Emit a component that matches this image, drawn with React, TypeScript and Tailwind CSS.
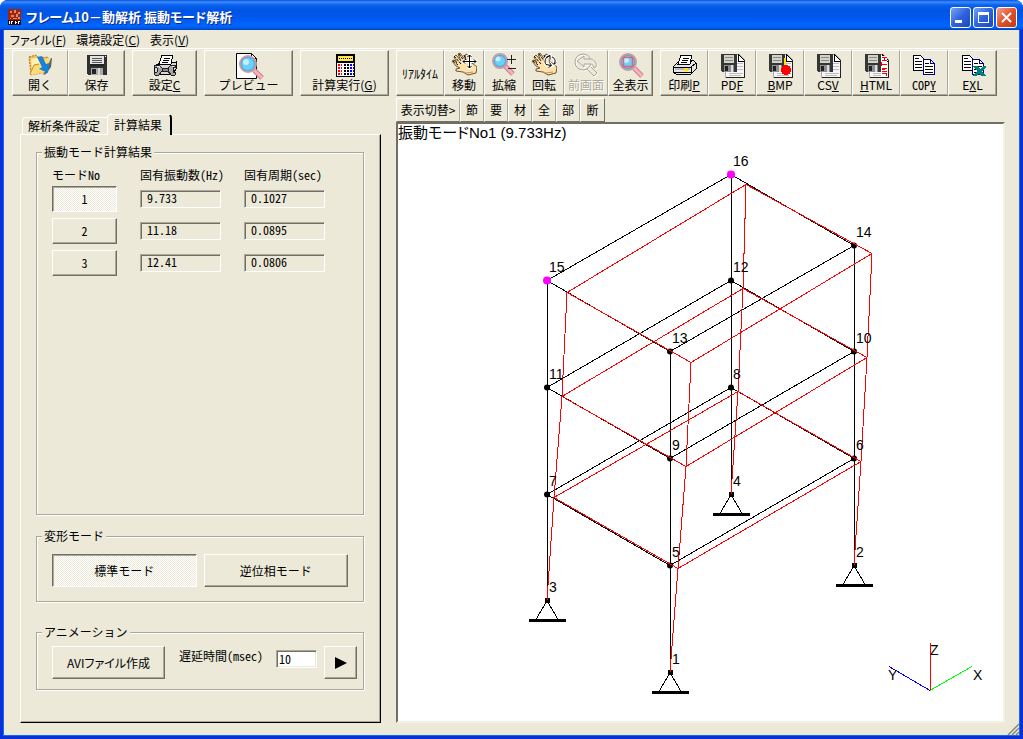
import React, { useState } from 'react';

type Point = [number, number];

interface ToolButtonProps {
  width: string;
  icon?: React.ReactNode;
  label: React.ReactNode;
  last?: boolean;
  disabled?: boolean;
}

const raised =
  'border border-t-white border-l-white border-r-[#716f64] border-b-[#716f64] shadow-[inset_-1px_-1px_0_#aca899] bg-[#ece9d8]';
const pressed =
  'border border-t-[#716f64] border-l-[#716f64] border-r-white border-b-white shadow-[inset_1px_1px_0_#aca899] bg-[repeating-conic-gradient(#fff_0_25%,#ece9d8_0_50%)] bg-[length:2px_2px]';
const sunken =
  'border border-t-[#aca899] border-l-[#aca899] border-r-white border-b-white shadow-[inset_1px_1px_0_#716f64,inset_-1px_-1px_0_#ece9d8]';

// ---------------------------------------------------------------- icons

const Icon: React.FC<{ children: React.ReactNode; crisp?: boolean }> = ({ children, crisp = false }) => (
  <svg width="26" height="26" viewBox="0 0 26 26" fill="none" shapeRendering={crisp ? 'crispEdges' : 'auto'} aria-hidden="true">
    {children}
  </svg>
);

const AppIcon = () => (
  <svg width="14" height="17" viewBox="0 0 14 17" shapeRendering="crispEdges" aria-hidden="true">
    <rect width="13" height="16" fill="#a02410" />
    <path d="M2 2h2v2h-2zM6 1h2v3h-2zM10 3h2v2h-2zM3 6h3v2h-3zM8 5h2v3h-2zM5 9h4v1h-4zM2 9h1v1h-1zM10 8h2v2h-2z" fill="#e08a60" />
    <rect y="11" width="13" height="5" fill="#2a0a06" />
    <path d="M1 12h1v3h-1zM3 12h2v1h-1v2h-1zM7 12h1v3h-1zM8 13h1v1h-1zM10 12h1v3h-1zM11 12h1v1h-1z" fill="#fff" />
  </svg>
);

const OpenIcon = () => (
  <Icon>
    <path d="M2 5l7-2 3 3 9-1-1 15-16 3z" fill="#f2bd48" stroke="#b4742c" strokeDasharray="2 1" />
    <path d="M4 7l8-2 2 13-9 3z" fill="#fff0b4" />
    <path d="M3 21l4-8 6-1 7-6 5 1-6 13-14 3z" fill="#ffda78" />
    <path d="M24 6h1l-1 9-5 7-3 1 4-7z" fill="#59616c" />
    <path d="M3 22l4-9 5-1" stroke="#c8862c" />
    <path d="M10 5l5-1 4 8 3-1-1 10-9-4 3-2z" fill="#1583d8" />
  </Icon>
);

const SaveIcon = () => (
  <Icon crisp>
    <path d="M3 3h20v20h-19l-1-1z" fill="#303030" />
    <rect x="6" y="4" width="14" height="10" fill="#e4e4e4" />
    <path d="M8 6h10M8 8h10M8 10h10" stroke="#555" />
    <path d="M6 12h14v2h-14z" fill="#222" />
    <rect x="7" y="16" width="12" height="7" fill="#a8a8a8" />
    <rect x="8" y="17" width="4" height="5" fill="#222" />
    <rect x="14" y="16" width="2" height="7" fill="#d8d8d8" />
    <rect x="21" y="4" width="1" height="1" fill="#fff" />
  </Icon>
);

const PrinterPaper = () => (
  <>
    <path d="M7 12l3-9h11l-2 9z" fill="#fff" stroke="#000" />
    <path d="M12 6h6M11 8h6M10 10h6" stroke="#000" />
  </>
);

const SetupIcon = () => (
  <Icon crisp>
    <path d="M2 15l5-4h12l5-1v7l-3 5h-16l-3-2z" fill="#d8d8d8" stroke="#000" />
    <PrinterPaper />
    <path d="M8 16h10v3h-10z" fill="#8c8c8c" stroke="#222" />
    <path d="M3 13h4l3 3v3l-3 4h-4l-1-2 3-1v-4l-3-1zM23 13h-4l-3 3v3l3 4h4l1-2-3-1v-4l3-1z" fill="#a4a4a4" stroke="#222" />
    <path d="M5 14h2l1 2M20 14h2" stroke="#e4e4e4" />
  </Icon>
);

const PrintIcon = () => (
  <Icon crisp>
    <path d="M2 15l5-5h12l3-2 3 3v6l-5 5h-15l-3-2z" fill="#e6e6e6" stroke="#000" />
    <PrinterPaper />
    <path d="M2 15h18l5-4M20 15v6" stroke="#000" />
    <rect x="4" y="16" width="15" height="2" fill="#bbb" />
    <rect x="13" y="16" width="4" height="3" fill="#ffe400" />
    <path d="M3 20h17" stroke="#000" />
  </Icon>
);

const Lens: React.FC<{ cx: number; cy: number; r: number }> = ({ cx, cy, r }) => (
  <>
    <path d={`M${cx + r - 2} ${cy + r - 2}l8 8`} stroke="#cc7c8c" strokeWidth="5" />
    <path d={`M${cx + r - 2} ${cy + r - 2}l8 8`} stroke="#f4b4bc" strokeWidth="3" />
    <circle cx={cx} cy={cy} r={r} fill="#38b0f0" stroke="#c89ca4" strokeWidth="2" />
    <circle cx={cx} cy={cy} r={r - 2} fill="#6cd0fa" />
    <circle cx={cx - 2} cy={cy - 2} r={r / 2 - 1} fill="#c4f0ff" />
  </>
);

const PreviewIcon = () => (
  <svg width="30" height="28" viewBox="0 0 30 28" fill="none" aria-hidden="true">
    <path d="M2.500 1.500h15l5 5v20h-20z" fill="#fff" stroke="#000" />
    <path d="M17.500 1.500v5h5" stroke="#000" />
    <Lens cx={14} cy={12} r={8} />
  </svg>
);

const CalcIcon = () => (
  <Icon crisp>
    <rect x="4" y="2" width="19" height="23" fill="#000" />
    <rect x="6" y="4" width="15" height="5" fill="#ffe94a" />
    <path d="M7 6.500h13" stroke="#000" strokeDasharray="1 1" />
    <rect x="5" y="11" width="17" height="13" fill="#fff" />
    <path d="M6 13h4M6 16h4M6 19h4M6 22h4" stroke="#f00" strokeWidth="2" strokeDasharray="2 1" />
    <path d="M12 13h5M12 16h5M12 19h5M12 22h5" stroke="#000" strokeWidth="2" strokeDasharray="2 1" />
    <path d="M18 13h4M18 16h4M18 19h4M18 22h4" stroke="#00f" strokeWidth="2" strokeDasharray="2 1" />
  </Icon>
);

const Hand = () => (
  <>
    <path
      d="M1 9l2-1 3 3-3-6 2-2 5 6-3-7 2-1 6 8-1-6 2-1 3 8 2 1 5 4-1 6-8 2-5-3-7-1 0-2 4-1-4-2z"
      fill="#ffe2ac"
      stroke="#6b5436"
    />
    <path d="M10 19l5 2 7-1" stroke="#c29357" />
    <path d="M3 4l7 8M8 2l6 8M2 9l5 4M13 3l2 5" stroke="#000" strokeDasharray="3 1" />
  </>
);

const MoveIcon = () => {
  const arrows = 'M18.500 3v13M12 9.500h13M16.500 5l2-2 2 2M16.500 14l2 2 2-2M14 7.500l-2 2 2 2M23 7.500l2 2-2 2';
  return (
    <Icon>
      <Hand />
      <path d={arrows} stroke="#fff" strokeWidth="3" />
      <path d={arrows} stroke="#000" />
    </Icon>
  );
};

const RotateIcon = () => {
  const arrows = 'M15 5.500l4-2v4M19 3.500c-5 2-6 6-4 9l5 1M17.500 15.500l3-2-2-3M21 5c3 1 4 4 2 7M21 10.500l2 2 2-2';
  return (
    <Icon>
      <Hand />
      <path d={arrows} stroke="#fff" strokeWidth="3" />
      <path d={arrows} stroke="#000" />
    </Icon>
  );
};

const ZoomIcon = () => (
  <Icon>
    <Lens cx={9} cy={9} r={7} />
    <path d="M16 7.500h9M20.500 3v9M17 16.500h8" stroke="#222" />
  </Icon>
);

const PreviousIcon = () => {
  const arrow = 'M4 9l7-5v3h7c4 1 6 4 5 8l-2 1c0-3-2-4-4-4h-6v3z';
  return (
    <Icon>
      <g stroke="#fff" transform="translate(1 1)">
        <circle cx="10" cy="10" r="8" />
        <path d="M14 17l7 7 3-3-6-6" />
        <path d={arrow} />
      </g>
      <g stroke="#aca899">
        <circle cx="10" cy="10" r="8" />
        <path d="M14 17l7 7 3-3-6-6" />
        <path d={arrow} fill="#ece9d8" />
      </g>
    </Icon>
  );
};

const FitIcon = () => (
  <Icon>
    <Lens cx={10} cy={10} r={8} />
    <rect x="5.500" y="5.500" width="9" height="9" stroke="#f06060" strokeWidth="1.500" />
  </Icon>
);

const FileSaveIcon: React.FC<{ children?: React.ReactNode }> = ({ children }) => (
  <Icon crisp>
    <path d="M6 2h14l5 5v18h-19z" fill="#f6f6f6" stroke="#aaa" />
    <path d="M19 2l6 6v1h-6z" fill="#fff" stroke="#000" />
    <path d="M18 11h6M18 14h6M18 17h6M10 21h14M10 23h12" stroke="#bcbcbc" />
    <path d="M25 8v17h-18" stroke="#222" />
    <path d="M2 2h16v18h-15l-1-1z" fill="#363636" />
    <rect x="5" y="3" width="10" height="8" fill="#d2d2c8" />
    <path d="M6 5.500h8M6 8.500h8" stroke="#8a8a84" />
    <rect x="5" y="13" width="10" height="7" fill="#8e8e8e" />
    <rect x="6" y="14" width="3" height="5" fill="#222" />
    <rect x="12" y="13" width="2" height="7" fill="#ddd" />
    {children}
  </Icon>
);

const BmpIcon = () => (
  <FileSaveIcon>
    <path d="M18 6v9" stroke="#ffe600" strokeWidth="2" />
    <circle cx="19" cy="18" r="5" fill="#f00" />
  </FileSaveIcon>
);

const HtmlIcon = () => (
  <FileSaveIcon>
    <rect x="18" y="4" width="6" height="20" fill="#fff" />
    <path d="M18.500 5h5M18.500 8h5M21 5v3M18.500 10v4M18.500 12h5M18.500 16h5M18.500 19h5M18.500 17.500h3M18.500 21h5M23.500 21v3" stroke="#f00" />
  </FileSaveIcon>
);

const CopyPages = () => (
  <>
    <path d="M2.500 3.500h7l4 4v11h-11z" fill="#fff" stroke="#000" />
    <path d="M4 6.500h4M4 9.500h7M4 12.500h7M4 15.500h7" stroke="#000" />
    <path d="M12.500 7.500h7l4 4v11h-11z" fill="#fff" stroke="#000080" />
    <path d="M19.500 7.500v4h4" stroke="#000080" />
    <path d="M14 11.500h4M14 14.500h8M14 17.500h8M14 20.500h8" stroke="#000" />
  </>
);

const CopyIcon = () => (
  <Icon crisp>
    <CopyPages />
  </Icon>
);

const ExcelIcon = () => (
  <Icon crisp>
    <CopyPages />
    <path d="M13 14h5l2 3 3-3h3v1l-4 4 4 5h-5l-2-3-3 3h-3v-1l4-4z" fill="#008080" />
  </Icon>
);

// -------------------------------------------------------------- widgets

const ToolButton: React.FC<ToolButtonProps> = ({ width, icon, label, last = false, disabled = false }) => (
  <button
    type="button"
    disabled={disabled}
    className={`flex h-[46px] shrink-0 flex-col items-center border-t border-l border-t-white border-l-white border-b border-b-[#716f64] border-r bg-[#ece9d8] pt-px ${
      last ? 'border-r-[#716f64] shadow-[inset_-1px_-1px_0_#aca899]' : 'border-r-[#aca899] shadow-[inset_0_-1px_0_#aca899]'
    } ${icon ? '' : 'justify-center'} ${disabled ? 'text-[#aca899] [text-shadow:1px_1px_0_#fff]' : ''} ${width}`}
  >
    {icon && <span className="flex h-[26px] items-start justify-center">{icon}</span>}
    <span className="text-xs leading-[14px] whitespace-nowrap">{label}</span>
  </button>
);

const Group: React.FC<{ title: string; className?: string; bodyClass: string; children: React.ReactNode }> = ({
  title,
  className = '',
  bodyClass,
  children,
}) => (
  <fieldset className={`min-w-0 border border-[#aca899] shadow-[1px_1px_0_#fff,inset_1px_1px_0_#fff] ${className}`}>
    <legend className="ml-[5px] bg-[#ece9d8] px-0.5 leading-[14px]">{title}</legend>
    <div className={bodyClass}>{children}</div>
  </fieldset>
);

const modes = [
  { no: 1, frequency: '9.733', period: '0.1027' },
  { no: 2, frequency: '11.18', period: '0.0895' },
  { no: 3, frequency: '12.41', period: '0.0806' },
];

const viewButtons = ['節', '要', '材', '全', '部', '断'];

// ---------------------------------------------------------------- model

const nodes: Record<number, Point> = {
  1: [272, 549], 2: [456, 442], 3: [149, 477], 4: [333, 371],
  5: [272, 442], 6: [456, 335], 7: [149, 371], 8: [333, 264],
  9: [272, 335], 10: [456, 228], 11: [149, 264], 12: [333, 157],
  13: [272, 228], 14: [456, 122], 15: [149, 157], 16: [333, 51],
};

const deformed: Record<number, Point> = {
  1: [272, 549], 2: [456, 442], 3: [149, 477], 4: [333, 371],
  5: [280, 445], 6: [463, 338], 7: [156, 374], 8: [340, 268],
  9: [288, 343], 10: [469, 234], 11: [164, 273], 12: [345, 165],
  13: [293, 239], 14: [474, 130], 15: [169, 169], 16: [348, 61],
};

const columns = [1, 2, 3, 4].map(n => [n, n + 4, n + 8, n + 12]);
const beams = [5, 9, 13].flatMap(n => [[n, n + 1], [n, n + 2], [n + 2, n + 3], [n + 1, n + 3]]);

const toPoints = (table: Record<number, Point>, ids: number[]) =>
  ids.map(id => `${table[id][0]},${table[id][1]}`).join(' ');

const nodeIds = Object.keys(nodes).map(Number);

const FrameView = () => (
  <svg
    viewBox="0 0 605 597"
    className="w-full flex-1 font-['Liberation_Sans','Noto_Sans_CJK_JP',sans-serif]"
    preserveAspectRatio="xMinYMin meet"
    role="img"
    aria-label="振動モード図"
  >
    <g transform="translate(0 -0.500)" fill="none" shapeRendering="crispEdges">
      <g stroke="#000">
        {[...columns, ...beams].map(ids => (
          <polyline key={ids.join('-')} points={toPoints(nodes, ids)} />
        ))}
      </g>
      {[1, 2, 3, 4].map(id => {
        const [x, y] = nodes[id];
        return (
          <g key={id} stroke="#000">
            <path d={`M${x - 11} ${y + 19}L${x} ${y}L${x + 11} ${y + 19}`} />
            <path d={`M${x - 18} ${y + 20}h37`} strokeWidth="3" />
            <rect x={x - 2} y={y - 2} width="4" height="4" fill="#000" />
          </g>
        );
      })}
      {nodeIds.filter(id => id > 4).map(id => (
        <circle key={id} cx={nodes[id][0]} cy={nodes[id][1]} r={id > 14 ? 4 : 3} fill={id > 14 ? '#ff00ff' : '#000'} shapeRendering="auto" />
      ))}
      <g stroke="#f00">
        {[...columns, ...beams].map(ids => (
          <polyline key={ids.join('-')} points={toPoints(deformed, ids)} />
        ))}
      </g>
      <path d="M532 567v-48" stroke="#f00" />
      <path d="M532 567l42-24" stroke="#0f0" />
      <path d="M532 567l-41-24" stroke="#00f" />
    </g>
    <g fontSize="14">
      {nodeIds.map(id => (
        <text key={id} x={nodes[id][0] + 2} y={nodes[id][1] - 9}>{id}</text>
      ))}
      <text x="532" y="531">Z</text>
      <text x="575" y="556">X</text>
      <text x="490" y="556">Y</text>
    </g>
    <text x="0" y="14" fontSize="15" className="[font-feature-settings:'palt']">振動モードNo1 (9.733Hz)</text>
  </svg>
);

// ------------------------------------------------------------------ app

const TitleBar = () => (
  <header className="flex h-[30px] items-center rounded-t-lg bg-[linear-gradient(#0a4fd6_0,#3a8cff_2px,#0a62ee_5px,#0054e3_10px,#0058ee_18px,#0066ff_26px,#0052d8_29px,#003cb4_30px)] pt-1 pr-1.5 pl-2">
    <AppIcon />
    <h1 className="ml-1 flex-1 text-[13px] leading-4 font-bold text-white [text-shadow:1px_1px_0_#0a2a8c] [font-feature-settings:'palt']">
      フレーム10－動解析 振動モード解析
    </h1>
    <div className="flex gap-0.5">
      <button type="button" aria-label="最小化" className="h-[21px] w-[21px] rounded-[3px] border border-white bg-linear-to-br from-[#7aa2f4] via-[#2e62dc] to-[#1c46c0]">
        <svg viewBox="0 0 19 19" shapeRendering="crispEdges"><path d="M4 12h7v3h-7z" fill="#fff" /></svg>
      </button>
      <button type="button" aria-label="最大化" className="h-[21px] w-[21px] rounded-[3px] border border-white bg-linear-to-br from-[#7aa2f4] via-[#2e62dc] to-[#1c46c0]">
        <svg viewBox="0 0 19 19" shapeRendering="crispEdges"><path d="M4 4h11v11h-11zM5 7v7h9v-7z" fill="#fff" fillRule="evenodd" /></svg>
      </button>
      <button type="button" aria-label="閉じる" className="h-[21px] w-[21px] rounded-[3px] border border-white bg-linear-to-br from-[#f0a088] via-[#e0502c] to-[#c03a14]">
        <svg viewBox="0 0 19 19"><path d="M5 5l9 9M14 5l-9 9" stroke="#fff" strokeWidth="2" /></svg>
      </button>
    </div>
  </header>
);

const MenuBar = () => (
  <nav className="flex h-[19px] gap-2.5 border-b border-white pl-1.5 leading-[17px] [font-feature-settings:'palt']">
    <button type="button">ファイル(<u>F</u>)</button>
    <button type="button">環境設定(<u>C</u>)</button>
    <button type="button">表示(<u>V</u>)</button>
  </nav>
);

const ToolBar = () => (
  <div className="flex pt-px pl-2">
    <ToolButton width="w-14" icon={<OpenIcon />} label="開く" />
    <ToolButton width="w-[57px]" icon={<SaveIcon />} label="保存" last />
    <div className="ml-[7px] flex">
      <ToolButton width="w-[65px]" icon={<SetupIcon />} label={<>設定<u>C</u></>} last />
    </div>
    <div className="ml-[7px] flex">
      <ToolButton width="w-[89px]" icon={<PreviewIcon />} label="プレビュー" last />
    </div>
    <div className="ml-[7px] flex">
      <ToolButton width="w-[89px]" icon={<CalcIcon />} label={<>計算実行(<u>G</u>)</>} last />
    </div>
    <div className="ml-[7px] flex">
      <ToolButton width="w-12" label="ﾘｱﾙﾀｲﾑ" />
      <ToolButton width="w-10" icon={<MoveIcon />} label="移動" />
      <ToolButton width="w-10" icon={<ZoomIcon />} label="拡縮" />
      <ToolButton width="w-10" icon={<RotateIcon />} label="回転" />
      <ToolButton width="w-11" icon={<PreviousIcon />} label="前画面" disabled />
      <ToolButton width="w-[45px]" icon={<FitIcon />} label="全表示" last />
    </div>
    <div className="ml-[7px] flex">
      <ToolButton width="w-12" icon={<PrintIcon />} label={<>印刷<u>P</u></>} />
      <ToolButton width="w-12" icon={<FileSaveIcon />} label={<>PD<u>F</u></>} />
      <ToolButton width="w-12" icon={<BmpIcon />} label={<><u>B</u>MP</>} />
      <ToolButton width="w-12" icon={<FileSaveIcon />} label={<>CS<u>V</u></>} />
      <ToolButton width="w-12" icon={<HtmlIcon />} label={<><u>H</u>TML</>} />
      <ToolButton width="w-12" icon={<CopyIcon />} label={<span className="[font-feature-settings:'hwid']">COP<u>Y</u></span>} />
      <ToolButton width="w-[49px]" icon={<ExcelIcon />} label={<>E<u>X</u>L</>} last />
    </div>
  </div>
);

const ResultPanel = () => {
  const [mode, setMode] = useState(1);
  const [shape, setShape] = useState<'standard' | 'reverse'>('standard');
  const [delay, setDelay] = useState('10');

  return (
    <section className="flex w-[361px] shrink-0 flex-col pt-[18px] [font-feature-settings:'hwid']">
      <div role="tablist" className="flex h-5 items-end pl-0.5">
        <button type="button" role="tab" aria-selected="false" className="h-[17px] w-[85px] rounded-tl-sm border-t border-l border-white pr-0.5 leading-[14px]">
          解析条件設定
        </button>
        <button
          type="button"
          role="tab"
          aria-selected="true"
          className="relative -mb-px h-[21px] w-[65px] rounded-t-sm border-t border-l border-r-2 border-t-white border-l-white border-r-black bg-[#ece9d8] pr-0.5 leading-[14px]"
        >
          計算結果
        </button>
      </div>
      <div className="flex flex-1 flex-col border border-t-white border-r-black border-b-black border-l-white pt-2.5 pr-4 pb-8 pl-[15px] shadow-[inset_-1px_-1px_0_#aca899]">
        <Group title="振動モード計算結果" className="flex-1" bodyClass="pt-2 pl-[15px]">
          <table className="table-fixed">
            <thead>
              <tr className="h-4 text-left leading-4 whitespace-nowrap">
                <th className="w-[88px] font-normal">モードNo</th>
                <th className="w-[104px] font-normal">固有振動数(Hz)</th>
                <th className="w-[104px] font-normal">固有周期(sec)</th>
              </tr>
            </thead>
            <tbody>
              {modes.map(row => (
                <tr key={row.no} className="h-8">
                  <td>
                    <button type="button" onClick={() => setMode(row.no)} className={`block h-[26px] w-[65px] ${mode === row.no ? pressed : raised}`}>
                      {row.no}
                    </button>
                  </td>
                  <td>
                    <input readOnly aria-label={`固有振動数 ${row.no}`} value={row.frequency} className={`block h-[18px] w-[81px] pb-1 pl-1.5 leading-3 ${sunken}`} />
                  </td>
                  <td>
                    <input readOnly aria-label={`固有周期 ${row.no}`} value={row.period} className={`block h-[18px] w-[81px] pb-1 pl-1.5 leading-3 ${sunken}`} />
                  </td>
                </tr>
              ))}
            </tbody>
          </table>
        </Group>
        <Group title="変形モード" className="mt-3.5" bodyClass="flex gap-[7px] px-[15px] pt-[11px] pb-3.5">
          <button type="button" onClick={() => setShape('standard')} className={`h-[33px] flex-1 ${shape === 'standard' ? pressed : raised}`}>
            標準モード
          </button>
          <button type="button" onClick={() => setShape('reverse')} className={`h-[33px] flex-1 ${shape === 'reverse' ? pressed : raised}`}>
            逆位相モード
          </button>
        </Group>
        <Group title="アニメーション" className="mt-[23px]" bodyClass="flex items-start pt-[7px] pr-1.5 pb-2.5 pl-[15px]">
          <button type="button" className={`h-[33px] w-[113px] [font-feature-settings:'palt'] ${raised}`}>AVIファイル作成</button>
          <label htmlFor="delay" className="ml-3.5 pt-1 leading-3">遅延時間(msec)</label>
          <input
            id="delay"
            value={delay}
            onChange={(e) => setDelay(e.target.value)}
            className={`mt-1 ml-auto h-[18px] w-[41px] bg-white pb-0.5 pl-0.5 leading-3 ${sunken}`}
          />
          <button type="button" aria-label="再生" className={`ml-[7px] flex h-[33px] w-[33px] items-center justify-center ${raised}`}>
            <svg width="12" height="12" viewBox="0 0 12 12" aria-hidden="true"><path d="M0 0l12 6-12 6z" /></svg>
          </button>
        </Group>
      </div>
    </section>
  );
};

const App: React.FC = () => (
  <div className="min-h-screen bg-white">
    <div className="flex min-h-screen flex-col rounded-t-lg bg-[#0831d9] font-['Noto_Sans_CJK_JP',sans-serif] text-xs text-black">
      <TitleBar />
      <main className="mx-[3px] mb-[3px] flex flex-1 flex-col border-x border-b border-[#166aee] bg-[#ece9d8]">
        <MenuBar />
        <ToolBar />
        <div className="flex flex-1 pl-4">
          <div className="flex pb-3">
            <ResultPanel />
          </div>
          <section className="ml-[15px] flex min-w-0 flex-1 flex-col pt-0.5">
            <div className="flex">
              <button type="button" className="h-6 w-16 border border-t-white border-r-[#aca899] border-b-[#716f64] border-l-white leading-[14px]">表示切替&gt;</button>
              {viewButtons.map(name => (
                <button key={name} type="button" className="h-6 w-6 border border-t-white border-r-[#aca899] border-b-[#716f64] border-l-white leading-[14px] last:w-[25px] last:border-r-[#716f64]">
                  {name}
                </button>
              ))}
            </div>
            <div className="mr-3.5 flex flex-1 flex-col border-2 border-t-[#716f64] border-r-[#f4f2e8] border-b-[#f4f2e8] border-l-[#716f64] bg-white">
              <FrameView />
            </div>
            <div className="flex h-3 items-end justify-end">
              <svg width="12" height="12" viewBox="0 0 12 12" aria-hidden="true">
                <path d="M1 12l11-11M5 12l7-7M9 12l3-3" stroke="#8a8778" strokeWidth="1.500" />
              </svg>
            </div>
          </section>
        </div>
      </main>
    </div>
  </div>
);

export default App;
